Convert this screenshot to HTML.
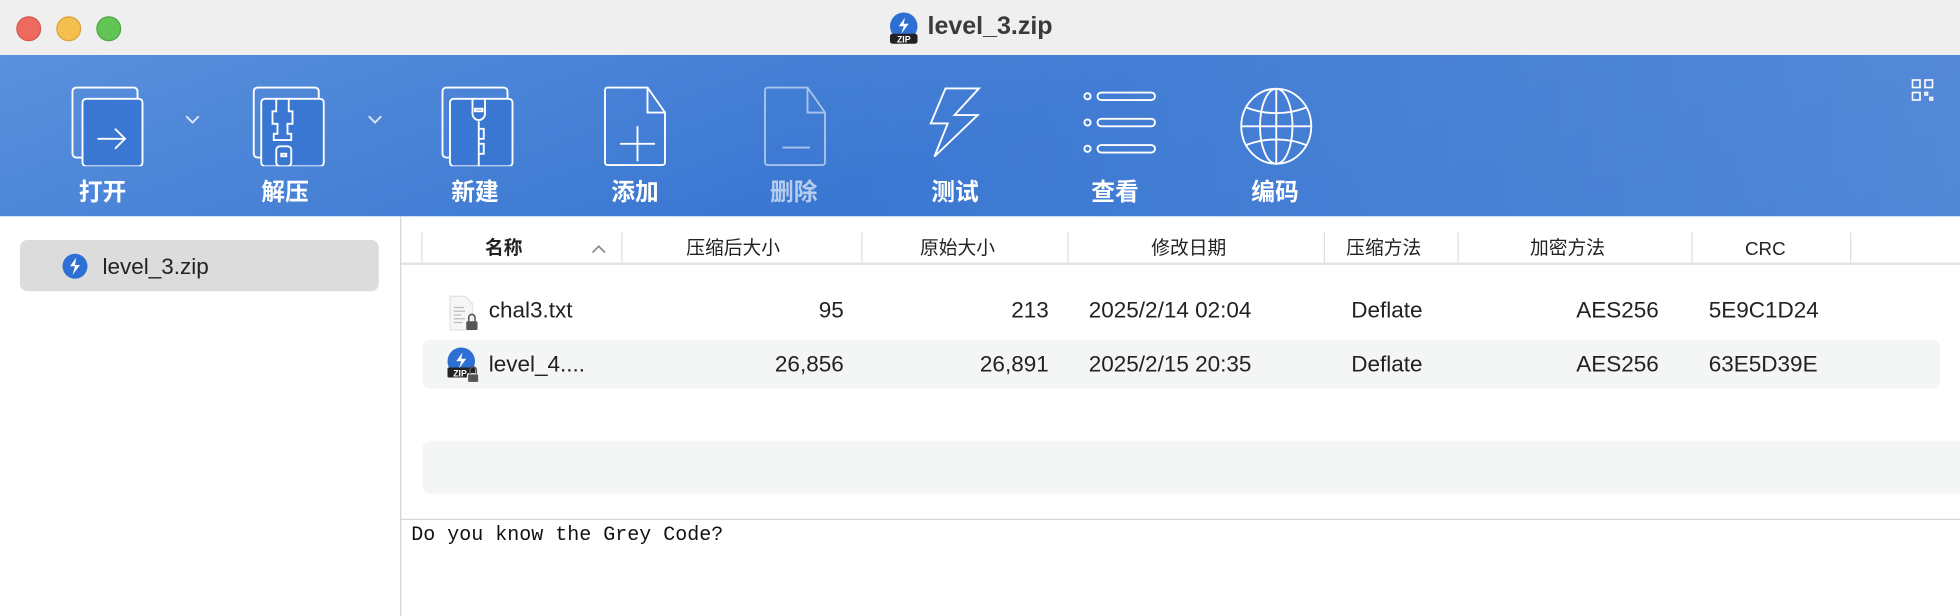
<!DOCTYPE html>
<html><head><meta charset="utf-8"><style>
html,body{margin:0;padding:0;width:1960px;height:614px;overflow:hidden;background:#fff}
#w{position:absolute;left:0;top:0;width:1568px;height:491.2px;transform:scale(1.25);transform-origin:0 0;font-family:"Liberation Sans","Noto Sans CJK SC",sans-serif;color:#222}
.a{position:absolute}
#title{left:0;top:0;width:1568px;height:44px;background:#efefef;border-bottom:1px solid #d6d6d6}
.tl{width:18px;height:18px;border-radius:50%;top:13px}
#tb{left:0;top:44px;width:1568px;height:129px;background:linear-gradient(160deg,#5a90dc 0%,#3a77d2 50%,#3373cf 100%)}
#tb2{left:0;top:44px;width:1568px;height:129px;background:linear-gradient(90deg,rgba(255,255,255,0) 40%,rgba(255,255,255,0.15) 100%)}
.lbl{top:139px;color:#fff;font-size:19px;font-weight:bold;width:100px;text-align:center;margin-left:-50px}
.ic{top:69px}
.hd{top:189px;font-size:15px;color:#222;line-height:20px}
.sep{top:186px;width:1px;height:24px;background:#ddd}
.c{font-size:18px;color:#222}
</style></head><body><div id="w">
<div id="title" class="a"></div>
<div class="a tl" style="left:13px;background:#ee6a5f;border:0.5px solid #d45a50"></div>
<div class="a tl" style="left:45px;background:#f5bf4f;border:0.5px solid #d9a43c"></div>
<div class="a tl" style="left:77px;background:#61c454;border:0.5px solid #4ea844"></div>
<svg class="a" style="left:711px;top:10px" width="24" height="26" viewBox="0 0 24 26"><circle cx="12" cy="11" r="11" fill="#2e6fd3"/><path d="M13 4l-5 7h4l-2 6 6-8h-4z" fill="#fff"/><rect x="1" y="17" width="22" height="8" rx="2" fill="#222"/><text x="12" y="24" fill="#fff" font-size="7" font-weight="bold" text-anchor="middle" font-family="Liberation Sans">ZIP</text></svg>
<div class="a" style="left:742px;top:10px;font-size:20px;font-weight:bold;color:#3a3a3a">level_3.zip</div>

<div id="tb" class="a"></div><div id="tb2" class="a"></div>
<svg class="a ic" style="left:56px" width="60" height="64" viewBox="0 0 60 64" fill="none" stroke="#fff" stroke-width="1.5"><rect x="2" y="1" width="52" height="56" rx="3"/><rect x="10" y="10" width="48" height="54" rx="3" fill="#3a77d2"/><path d="M22 42h22M36 34l8 8-8 8"/></svg>
<svg class="a" style="left:148px;top:92px" width="12" height="8" viewBox="0 0 12 8" fill="none" stroke="#dde8f8" stroke-width="1.5"><path d="M1 1l5 5 5-5"/></svg>
<svg class="a ic" style="left:201px" width="60" height="64" viewBox="0 0 60 64" fill="none" stroke="#fff" stroke-width="1.5"><rect x="2" y="1" width="52" height="56" rx="3"/><rect x="8" y="10" width="50" height="54" rx="3" fill="#3a77d2"/><path d="M20 10v10h-3v10h4v8h-3v5h14v-5h-3v-8h4V20h-3V10"/><rect x="20" y="48" width="12" height="16" rx="3"/><rect x="24" y="54" width="4" height="2"/></svg>
<svg class="a" style="left:294px;top:92px" width="12" height="8" viewBox="0 0 12 8" fill="none" stroke="#dde8f8" stroke-width="1.5"><path d="M1 1l5 5 5-5"/></svg>
<svg class="a ic" style="left:352px" width="60" height="64" viewBox="0 0 60 64" fill="none" stroke="#fff" stroke-width="1.5"><rect x="2" y="1" width="52" height="56" rx="3"/><rect x="8" y="10" width="50" height="54" rx="3" fill="#3a77d2"/><path d="M26 10v12a5 5 0 0 0 10 0V10M31 28v36M31 34h4v8h-4M31 46h4v8h-4"/><rect x="28" y="18" width="6" height="2"/></svg>
<svg class="a ic" style="left:483px" width="52" height="64" viewBox="0 0 52 64" fill="none" stroke="#fff" stroke-width="1.5"><path d="M3 1h32l14 20v40a2 2 0 0 1-2 2H3a2 2 0 0 1-2-2V3a2 2 0 0 1 2-2zM35 1v20h14M27 32v28M13 46h28"/></svg>
<svg class="a ic" style="left:611px" width="52" height="64" viewBox="0 0 52 64" fill="none" stroke="#a9c4ea" stroke-width="1.5"><path d="M3 1h32l14 20v40a2 2 0 0 1-2 2H3a2 2 0 0 1-2-2V3a2 2 0 0 1 2-2zM35 1v20h14M15 49h22"/></svg>
<svg class="a" style="left:739px;top:68px" width="52" height="64" viewBox="0 0 52 64" fill="none" stroke="#fff" stroke-width="1.5" stroke-linejoin="miter"><path d="M17.4 2.7H44.2L24.6 24H43.2L8.5 57.3L19.2 30.7H5.6Z"/></svg>
<svg class="a ic" style="left:864px" width="62" height="64" viewBox="0 0 62 64" fill="none" stroke="#fff" stroke-width="1.5"><circle cx="6" cy="8" r="2.5"/><circle cx="6" cy="29" r="2.5"/><circle cx="6" cy="50" r="2.5"/><rect x="14" y="5" width="46" height="6" rx="3"/><rect x="14" y="26" width="46" height="6" rx="3"/><rect x="14" y="47" width="46" height="6" rx="3"/></svg>
<svg class="a ic" style="left:990px" width="62" height="64" viewBox="0 0 62 64" fill="none" stroke="#fff" stroke-width="1.5"><ellipse cx="31" cy="32" rx="28" ry="30"/><ellipse cx="31" cy="32" rx="13" ry="30"/><path d="M31 2v60M3 32h56M7 17c15 6 33 6 48 0M7 47c15-6 33-6 48 0"/></svg>
<div class="a lbl" style="left:82px">打开</div>
<div class="a lbl" style="left:228px">解压</div>
<div class="a lbl" style="left:380px">新建</div>
<div class="a lbl" style="left:508px">添加</div>
<div class="a lbl" style="left:635px;color:#b6cdef">删除</div>
<div class="a lbl" style="left:764px">测试</div>
<div class="a lbl" style="left:892px">查看</div>
<div class="a lbl" style="left:1020px">编码</div>
<svg class="a" style="left:1529px;top:63px" width="18" height="18" viewBox="0 0 18 18" fill="none" stroke="#fff" stroke-width="1.3"><rect x="1" y="1" width="6" height="6"/><rect x="11" y="1" width="6" height="6"/><rect x="1" y="11" width="6" height="6"/><rect x="11" y="11" width="2" height="2"/><rect x="15" y="15" width="2" height="2"/></svg>

<div class="a" style="left:320px;top:173px;width:1px;height:320px;background:#d6d6d6"></div>
<div class="a" style="left:16px;top:192px;width:287px;height:41px;background:#dcdcdc;border-radius:6px"></div>
<svg class="a" style="left:49px;top:202px" width="22" height="22" viewBox="0 0 22 22"><circle cx="11" cy="11" r="10" fill="#2e6fd3"/><path d="M12 4l-5 7h4l-2 7 6-8h-4z" fill="#fff"/></svg>
<div class="a c" style="left:82px;top:203px">level_3.zip</div>

<div class="a" style="left:321px;top:210px;width:1247px;height:2px;background:#e4e4e4"></div>
<div class="a sep" style="left:337px"></div><div class="a sep" style="left:497px"></div><div class="a sep" style="left:689px"></div><div class="a sep" style="left:854px"></div><div class="a sep" style="left:1059px"></div><div class="a sep" style="left:1166px"></div><div class="a sep" style="left:1353px"></div><div class="a sep" style="left:1480px"></div>
<div class="a hd" style="left:388px;font-weight:bold">名称</div>
<svg class="a" style="left:473px;top:195px" width="12" height="8" viewBox="0 0 12 8" fill="none" stroke="#888" stroke-width="1.3"><path d="M1 7l5-5 5 5"/></svg>
<div class="a hd" style="left:549px">压缩后大小</div>
<div class="a hd" style="left:736px">原始大小</div>
<div class="a hd" style="left:921px">修改日期</div>
<div class="a hd" style="left:1077px">压缩方法</div>
<div class="a hd" style="left:1224px">加密方法</div>
<div class="a hd" style="left:1396px;top:190px">CRC</div>

<div class="a" style="left:338px;top:272px;width:1214px;height:39px;background:#f4f5f5;border-radius:6px"></div>
<div class="a" style="left:338px;top:353px;width:1230px;height:42px;background:#f4f5f5;border-radius:6px 0 0 6px"></div>
<svg class="a" style="left:357px;top:236px" width="30" height="30" viewBox="0 0 30 30"><path d="M3 1h12l6 6v21H3z" fill="#f6f6f6" stroke="#e2e2e2"/><path d="M6 10h8M6 13h9M6 16h6M6 19h9M6 22h7" stroke="#bbb"/><rect x="16" y="21" width="9" height="7" rx="1" fill="#555"/><path d="M18 21v-3a2.5 2.5 0 0 1 5 0v3" fill="none" stroke="#555" stroke-width="1.3"/></svg>
<div class="a c" style="left:391px;top:238px">chal3.txt</div>
<div class="a c" style="left:560px;top:238px;width:115px;text-align:right">95</div>
<div class="a c" style="left:730px;top:238px;width:109px;text-align:right">213</div>
<div class="a c" style="left:871px;top:238px">2025/2/14 02:04</div>
<div class="a c" style="left:1081px;top:238px">Deflate</div>
<div class="a c" style="left:1261px;top:238px">AES256</div>
<div class="a c" style="left:1367px;top:238px">5E9C1D24</div>
<svg class="a" style="left:355px;top:278px" width="32" height="30" viewBox="0 0 32 30"><circle cx="14" cy="11" r="11" fill="#2e6fd3"/><path d="M15 4l-5 7h4l-2 6 6-8h-4z" fill="#fff"/><rect x="3" y="16" width="22" height="8" rx="1" fill="#222"/><text x="13" y="23" fill="#fff" font-size="7" font-weight="bold" text-anchor="middle" font-family="Liberation Sans">ZIP</text><rect x="19" y="21" width="9" height="7" rx="1" fill="#555" stroke="#f4f5f5"/><path d="M21 21v-3a2.5 2.5 0 0 1 5 0v3" fill="none" stroke="#555" stroke-width="1.3"/></svg>
<div class="a c" style="left:391px;top:281px">level_4....</div>
<div class="a c" style="left:560px;top:281px;width:115px;text-align:right">26,856</div>
<div class="a c" style="left:730px;top:281px;width:109px;text-align:right">26,891</div>
<div class="a c" style="left:871px;top:281px">2025/2/15 20:35</div>
<div class="a c" style="left:1081px;top:281px">Deflate</div>
<div class="a c" style="left:1261px;top:281px">AES256</div>
<div class="a c" style="left:1367px;top:281px">63E5D39E</div>

<div class="a" style="left:321px;top:415px;width:1247px;height:1px;background:#d6d6d6"></div>
<div class="a" style="left:329px;top:419px;font-family:'Liberation Mono',monospace;font-size:16px;color:#111">Do you know the Grey Code?</div>
</div></body></html>
